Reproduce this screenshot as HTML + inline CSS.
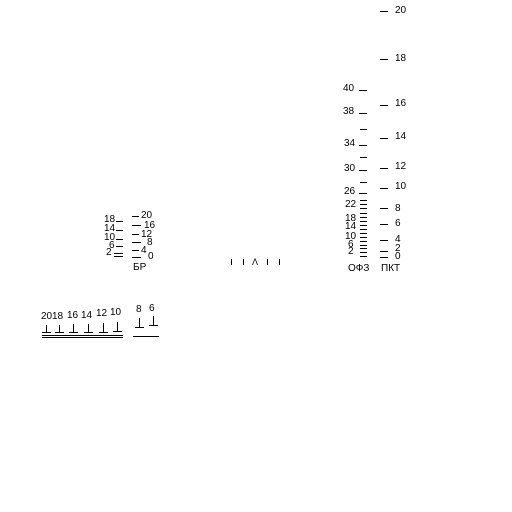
<!DOCTYPE html>
<html><head><meta charset="utf-8"><style>
body{margin:0;width:512px;height:512px;background:#fff;position:relative;overflow:hidden;font-family:"Liberation Sans",sans-serif;font-size:10px;color:#000}
.t{position:absolute;line-height:10px;white-space:nowrap}
.d{position:absolute;height:1px;background:#000}
.v{position:absolute;width:1px;background:#000}
</style></head><body>
<!-- PKT -->
<div class="d" style="left:380px;top:11px;width:8px"></div><div class="t" style="left:395px;top:6px">20</div>
<div class="d" style="left:380px;top:59px;width:8px"></div><div class="t" style="left:395px;top:54px">18</div>
<div class="d" style="left:380px;top:105px;width:8px"></div><div class="t" style="left:395px;top:99px">16</div>
<div class="d" style="left:380px;top:138px;width:8px"></div><div class="t" style="left:395px;top:132px">14</div>
<div class="d" style="left:380px;top:168px;width:8px"></div><div class="t" style="left:395px;top:162px">12</div>
<div class="d" style="left:380px;top:188px;width:8px"></div><div class="t" style="left:395px;top:182px">10</div>
<div class="d" style="left:380px;top:208px;width:8px"></div><div class="t" style="left:395px;top:204px">8</div>
<div class="d" style="left:380px;top:224px;width:8px"></div><div class="t" style="left:395px;top:219px">6</div>
<div class="d" style="left:380px;top:240px;width:8px"></div><div class="t" style="left:395px;top:235px">4</div>
<div class="d" style="left:380px;top:251px;width:8px"></div><div class="t" style="left:395px;top:244px">2</div>
<div class="d" style="left:380px;top:257px;width:8px"></div><div class="t" style="left:395px;top:252px">0</div>
<div class="t" style="left:381px;top:264px">ПКТ</div>
<!-- OFZ -->
<div class="t" style="left:343px;top:84px">40</div><div class="d" style="left:359px;top:90px;width:8px"></div>
<div class="t" style="left:343px;top:107px">38</div><div class="d" style="left:359px;top:113px;width:8px"></div>
<div class="d" style="left:360px;top:129px;width:7px"></div>
<div class="t" style="left:344px;top:139px">34</div><div class="d" style="left:359px;top:145px;width:8px"></div>
<div class="d" style="left:360px;top:157px;width:7px"></div>
<div class="t" style="left:344px;top:164px">30</div><div class="d" style="left:359px;top:170px;width:8px"></div>
<div class="d" style="left:360px;top:182px;width:7px"></div>
<div class="t" style="left:344px;top:187px">26</div><div class="d" style="left:359px;top:193px;width:8px"></div>
<div class="d" style="left:360px;top:200px;width:7px"></div>
<div class="t" style="left:345px;top:200px">22</div><div class="d" style="left:360px;top:204px;width:7px"></div>
<div class="d" style="left:360px;top:208px;width:7px"></div>
<div class="d" style="left:360px;top:213px;width:7px"></div>
<div class="t" style="left:345px;top:214px">18</div><div class="d" style="left:360px;top:217px;width:7px"></div>
<div class="d" style="left:360px;top:221px;width:7px"></div>
<div class="t" style="left:345px;top:222px">14</div><div class="d" style="left:360px;top:225px;width:7px"></div>
<div class="d" style="left:360px;top:229px;width:7px"></div>
<div class="t" style="left:345px;top:232px">10</div><div class="d" style="left:360px;top:233px;width:7px"></div>
<div class="d" style="left:360px;top:237px;width:7px"></div>
<div class="t" style="left:348px;top:240px">6</div><div class="d" style="left:360px;top:241px;width:7px"></div>
<div class="d" style="left:360px;top:245px;width:7px"></div>
<div class="t" style="left:348px;top:247px">2</div><div class="d" style="left:360px;top:248px;width:7px"></div>
<div class="d" style="left:360px;top:252px;width:7px"></div>
<div class="d" style="left:360px;top:256px;width:7px"></div>
<div class="t" style="left:348px;top:264px">ОФЗ</div>
<!-- center marks -->
<div class="v" style="left:231px;top:259px;height:6px"></div>
<div class="v" style="left:243px;top:259px;height:6px"></div>
<div class="t" style="left:252px;top:257px;font-size:9px">Λ</div>
<div class="v" style="left:267px;top:259px;height:6px"></div>
<div class="v" style="left:279px;top:259px;height:6px"></div>
<!-- BR -->
<div class="t" style="left:104px;top:215px">18</div><div class="d" style="left:116px;top:221px;width:7px"></div>
<div class="t" style="left:104px;top:224px">14</div><div class="d" style="left:116px;top:230px;width:7px"></div>
<div class="t" style="left:104px;top:233px">10</div><div class="d" style="left:116px;top:239px;width:7px"></div>
<div class="t" style="left:109px;top:241px">6</div><div class="d" style="left:116px;top:246px;width:7px"></div>
<div class="t" style="left:106px;top:248px">2</div><div class="d" style="left:114px;top:253px;width:9px"></div><div class="d" style="left:114px;top:256px;width:9px"></div>
<div class="d" style="left:132px;top:216px;width:7px"></div><div class="t" style="left:141px;top:211px">20</div>
<div class="d" style="left:132px;top:225px;width:9px"></div><div class="t" style="left:144px;top:221px">16</div>
<div class="d" style="left:132px;top:234px;width:7px"></div><div class="t" style="left:141px;top:230px">12</div>
<div class="d" style="left:132px;top:242px;width:9px"></div><div class="t" style="left:147px;top:238px">8</div>
<div class="d" style="left:132px;top:250px;width:7px"></div><div class="t" style="left:141px;top:246px">4</div>
<div class="d" style="left:132px;top:257px;width:9px"></div><div class="t" style="left:148px;top:252px">0</div>
<div class="t" style="left:133px;top:263px">БР</div>
<!-- bottom -->
<div class="t" style="left:41px;top:312px">20</div><div class="t" style="left:52px;top:312px">18</div>
<div class="t" style="left:67px;top:311px">16</div><div class="t" style="left:81px;top:311px">14</div>
<div class="t" style="left:96px;top:309px">12</div><div class="t" style="left:110px;top:308px">10</div>
<div class="t" style="left:136px;top:305px">8</div><div class="t" style="left:149px;top:304px">6</div>
<div class="v" style="left:46px;top:325px;height:8px"></div><div class="d" style="left:42px;top:332px;width:9px"></div>
<div class="v" style="left:59px;top:325px;height:8px"></div><div class="d" style="left:55px;top:332px;width:9px"></div>
<div class="v" style="left:73px;top:324px;height:9px"></div><div class="d" style="left:69px;top:332px;width:9px"></div>
<div class="v" style="left:88px;top:324px;height:9px"></div><div class="d" style="left:84px;top:332px;width:9px"></div>
<div class="v" style="left:103px;top:323px;height:10px"></div><div class="d" style="left:99px;top:332px;width:9px"></div>
<div class="v" style="left:117px;top:322px;height:10px"></div><div class="d" style="left:113px;top:331px;width:9px"></div>
<div class="v" style="left:139px;top:318px;height:10px"></div><div class="d" style="left:135px;top:327px;width:9px"></div>
<div class="v" style="left:153px;top:316px;height:10px"></div><div class="d" style="left:149px;top:325px;width:9px"></div>
<div class="d" style="left:42px;top:335px;width:81px"></div><div class="d" style="left:42px;top:337px;width:81px"></div>
<div class="d" style="left:133px;top:336px;width:26px"></div>
</body></html>
